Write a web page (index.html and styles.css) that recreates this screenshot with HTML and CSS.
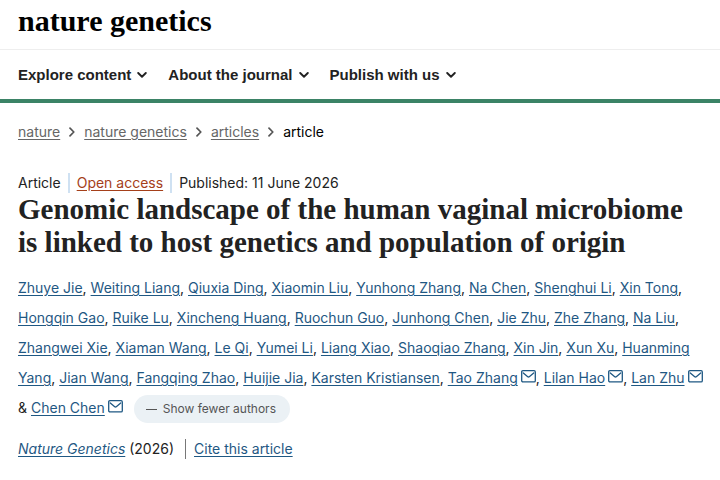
FILE: index.html
```
<!DOCTYPE html>
<html lang="en">
<head>
    <meta charset="utf-8">
    <meta name="viewport" content="width=device-width, initial-scale=1">
    <title>Genomic landscape of the human vaginal microbiome is linked to host genetics and population of origin | Nature Genetics</title>
    <link rel="stylesheet" href="styles.css">
</head>
<body>
    <!-- Shared icons -->
    <svg class="icon-defs" aria-hidden="true">
        <symbol id="icon-down" viewBox="0 0 10 8">
            <path d="M1.2 2l3.8 3.7L8.8 2" fill="none" stroke="currentColor" stroke-width="1.9" stroke-linecap="round" stroke-linejoin="round"/>
        </symbol>
        <symbol id="icon-right" viewBox="0 0 8 10">
            <path d="M2 1.2l3.8 3.8L2 8.8" fill="none" stroke="currentColor" stroke-width="1.7" stroke-linecap="round" stroke-linejoin="round"/>
        </symbol>
        <symbol id="icon-mail" viewBox="0 0 15 13">
            <rect x="0.7" y="0.7" width="13.6" height="11.2" rx="1.2" fill="none" stroke="currentColor" stroke-width="1.3"/>
            <path d="M2.3 3l4.4 3.7q.8.6 1.6 0L12.7 3" fill="none" stroke="currentColor" stroke-width="1.3" stroke-linecap="round"/>
        </symbol>
    </svg>

    <header class="header">
        <div class="header-logo">
            <a href="#">nature genetics</a>
        </div>
        <nav class="header-nav" aria-label="Journal">
            <button type="button">Explore content <svg class="icon-down"><use href="#icon-down"/></svg></button>
            <button type="button">About the journal <svg class="icon-down"><use href="#icon-down"/></svg></button>
            <button type="button">Publish with us <svg class="icon-down"><use href="#icon-down"/></svg></button>
        </nav>
    </header>

    <main class="container">
        <nav aria-label="Breadcrumb">
            <ol class="breadcrumbs">
                <li><a href="#">nature</a><svg class="icon-right"><use href="#icon-right"/></svg></li>
                <li><a href="#">nature genetics</a><svg class="icon-right"><use href="#icon-right"/></svg></li>
                <li><a href="#">articles</a><svg class="icon-right"><use href="#icon-right"/></svg></li>
                <li>article</li>
            </ol>
        </nav>

        <article>
            <ul class="identifiers">
                <li>Article</li>
                <li><a class="open-access" href="#">Open access</a></li>
                <li>Published: <time datetime="2026-06-11">11 June 2026</time></li>
            </ul>

            <h1>Genomic landscape of the human vaginal microbiome is linked to host genetics and population of origin</h1>

            <div class="authors">
                <a href="#">Zhuye Jie</a>,
                <a href="#">Weiting Liang</a>,
                <a href="#">Qiuxia Ding</a>,
                <a href="#">Xiaomin Liu</a>,
                <a href="#">Yunhong Zhang</a>,
                <a href="#">Na Chen</a>,
                <a href="#">Shenghui Li</a>,
                <a href="#">Xin Tong</a>,
                <a href="#">Hongqin Gao</a>,
                <a href="#">Ruike Lu</a>,
                <a href="#">Xincheng Huang</a>,
                <a href="#">Ruochun Guo</a>,
                <a href="#">Junhong Chen</a>,
                <a href="#">Jie Zhu</a>,
                <a href="#">Zhe Zhang</a>,
                <a href="#">Na Liu</a>,
                <a href="#">Zhangwei Xie</a>,
                <a href="#">Xiaman Wang</a>,
                <a href="#">Le Qi</a>,
                <a href="#">Yumei Li</a>,
                <a href="#">Liang Xiao</a>,
                <a href="#">Shaoqiao Zhang</a>,
                <a href="#">Xin Jin</a>,
                <a href="#">Xun Xu</a>,
                <a href="#">Huanming Yang</a>,
                <a href="#">Jian Wang</a>,
                <a href="#">Fangqing Zhao</a>,
                <a href="#">Huijie Jia</a>,
                <a href="#">Karsten Kristiansen</a>,
                <span class="corresponding"><a href="#">Tao Zhang<svg class="icon-mail"><use href="#icon-mail"/></svg></a>,</span>
                <span class="corresponding"><a href="#">Lilan Hao<svg class="icon-mail"><use href="#icon-mail"/></svg></a>,</span>
                <span class="corresponding"><a href="#">Lan Zhu<svg class="icon-mail"><use href="#icon-mail"/></svg></a></span>
                &amp;
                <span class="corresponding"><a href="#">Chen Chen<svg class="icon-mail"><use href="#icon-mail"/></svg></a></span>
                <button class="authors-toggle" type="button"><span class="minus"></span>Show fewer authors</button>
            </div>

            <p class="journal-info">
                <span><a href="#"><i>Nature Genetics</i></a> (2026)</span>
                <a class="cite" href="#">Cite this article</a>
            </p>
        </article>
    </main>
</body>
</html>
```

FILE: styles.css
```
* {
    box-sizing: border-box;
}

body {
    margin: 0;
    background-color: #fff;
    color: #222;
    font-family: Inter, "Liberation Sans", sans-serif;
    font-size: 14px;
    line-height: 20px;
}

a {
    color: #1f5883;
    text-underline-offset: 2px;
    text-decoration-thickness: 1px;
}

.icon-defs {
    display: none;
}

/* Header */
.header {
    border-bottom: 4px solid #3b8366;
}

.header-logo {
    height: 50px;
    padding: 4px 18px 0;
    border-bottom: 1px solid #eee;
}

.header-logo a {
    color: #000;
    font-family: "Liberation Serif", serif;
    font-size: 30px;
    font-weight: bold;
    line-height: 34px;
    text-decoration: none;
}

.header-nav {
    display: flex;
    gap: 21px;
    padding: 15px 18px 14px;
}

.header-nav button {
    display: flex;
    align-items: center;
    gap: 6px;
    padding: 0;
    border: 0;
    background: none;
    color: #222;
    font: bold 15px/20px "Liberation Sans", sans-serif;
}

.icon-down {
    width: 10px;
    height: 8px;
}

/* Article */
.container {
    padding: 19px 12px 18px 18px;
}

.breadcrumbs {
    display: flex;
    margin: 0 0 31px;
    padding: 0;
    list-style: none;
    color: #000;
}

.breadcrumbs li {
    display: flex;
    align-items: center;
}

.breadcrumbs a {
    color: #666;
}

.icon-right {
    width: 8px;
    height: 10px;
    margin: 0 8px;
    color: #555;
}

.identifiers {
    display: flex;
    margin: 0;
    padding: 0;
    list-style: none;
}

.identifiers li + li {
    margin-left: 7px;
    padding-left: 7px;
    border-left: 2px solid #cfe1f2;
}

.open-access {
    color: #a5401a;
}

h1 {
    margin: 0 0 14px;
    font-family: "Liberation Serif", serif;
    font-size: 29px;
    line-height: 33px;
}

.authors {
    line-height: 30px;
    margin-bottom: 16px;
}

.corresponding {
    white-space: nowrap;
}

.icon-mail {
    width: 15px;
    height: 13px;
    margin-left: 3px;
}

.authors-toggle {
    display: inline-flex;
    align-items: center;
    gap: 6px;
    height: 28px;
    margin-left: 7px;
    padding: 0 14px 0 12px;
    border: 0;
    border-radius: 14px;
    background-color: #ebf1f5;
    color: #555;
    font: 12px/20px Inter, "Liberation Sans", sans-serif;
    vertical-align: middle;
}

.minus {
    width: 11px;
    height: 1px;
    background-color: #555;
}

.journal-info {
    display: flex;
    margin: 0;
}

.cite {
    margin-left: 11px;
    padding-left: 8px;
    border-left: 1px solid #777;
}
```
